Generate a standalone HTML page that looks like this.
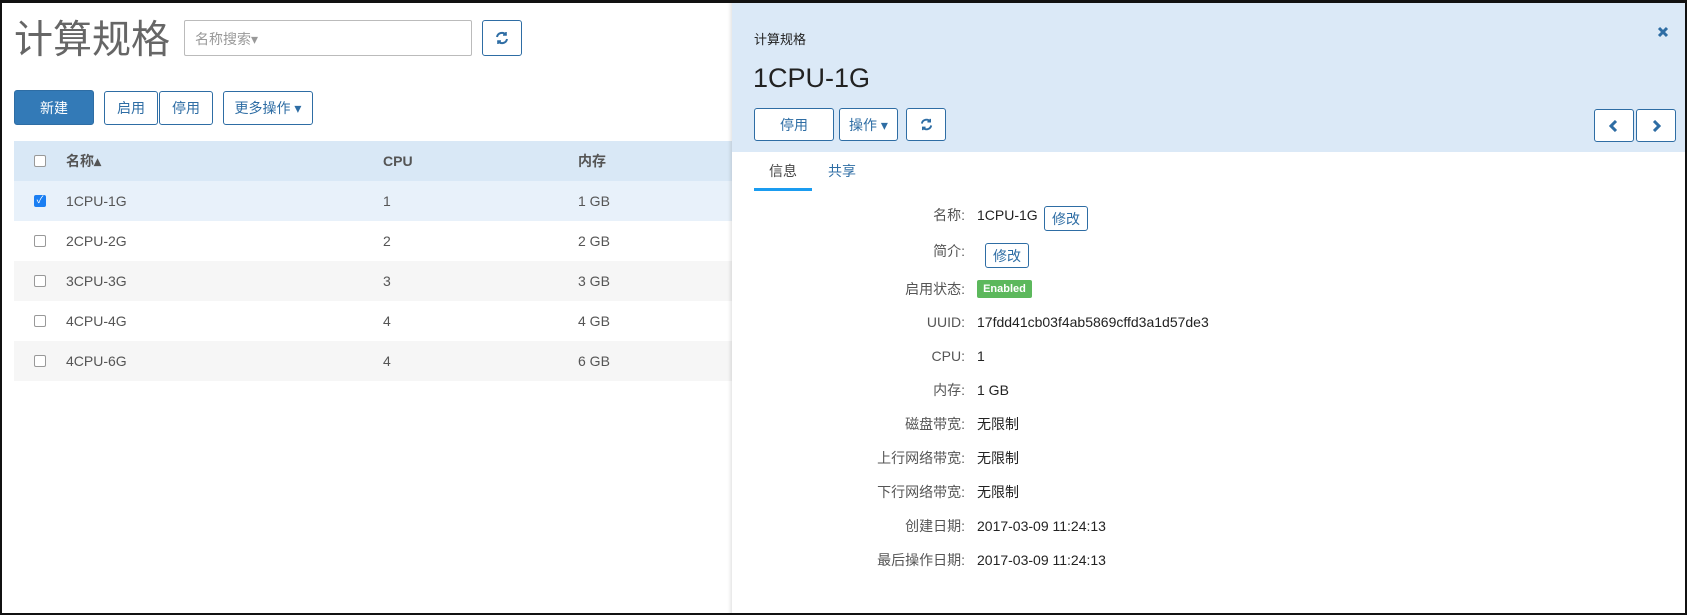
<!DOCTYPE html><html><head><meta charset="utf-8"><style>
*{box-sizing:border-box;margin:0;padding:0}
body{width:1687px;height:615px;overflow:hidden;background:#fff;font-family:"Liberation Sans","Noto Sans CJK SC",sans-serif;color:#333;font-size:14px;line-height:16px;position:relative}
.frame{position:absolute;inset:0;border:2px solid #111;border-top-width:3px;pointer-events:none;z-index:10}
.a{position:absolute}
.btn{position:absolute;border:1px solid #2e6da4;border-radius:3px;background:#fff;color:#2e6da4;display:flex;align-items:center;justify-content:center;font-size:14px}
.row{position:absolute;left:14px;width:720px;height:40px}
.row span{position:absolute;top:12px;color:#555;line-height:16px}
.cb{position:absolute;left:20px;top:14px;width:12px;height:12px;border:1px solid #999;border-radius:2px;background:#fff}
.lbl{position:absolute;width:240px;left:725px;text-align:right;color:#555;line-height:16px}
.val{position:absolute;left:977px;color:#222;line-height:16px}
</style></head><body>
<div class="frame"></div>
<div class="a" style="left:14px;top:20px;font-size:39px;line-height:42px;color:#666">计算规格</div>
<div class="a" style="left:184px;top:20px;width:288px;height:36px;border:1px solid #bbb;border-radius:2px;color:#999;font-size:14px;padding:10px 10px">名称搜索▾</div>
<div class="btn" style="left:482px;top:20px;width:40px;height:36px"><svg width="16" height="16" viewBox="0 0 16 16" fill="none" stroke="#2e6da4" stroke-width="2"><path d="M3 7a5 5 0 0 1 9-2"/><path d="M13 9a5 5 0 0 1-9 2"/><path d="M12 2v3h-3M4 14v-3h3" stroke-width="1.6"/></svg></div>
<div class="btn" style="left:14px;top:90px;width:80px;height:35px;background:#337ab7;color:#fff">新建</div>
<div class="btn" style="left:104px;top:91px;width:54px;height:34px">启用</div>
<div class="btn" style="left:159px;top:91px;width:54px;height:34px">停用</div>
<div class="btn" style="left:223px;top:91px;width:90px;height:34px">更多操作 ▾</div>
<div class="row" style="top:141px;background:#d9e8f6"><div class="cb"></div><span style="left:52px;font-weight:bold;color:#555">名称▴</span><span style="left:369px;font-weight:bold">CPU</span><span style="left:564px;font-weight:bold">内存</span></div>
<div class="row" style="top:181px;background:#e8f1fa"><div class="cb" style="background:#1a7ef2;border-color:#1a7ef2;color:#fff;font-size:10px;line-height:10px;text-align:center">✓</div><span style="left:52px">1CPU-1G</span><span style="left:369px">1</span><span style="left:564px">1 GB</span></div>
<div class="row" style="top:221px"><div class="cb"></div><span style="left:52px">2CPU-2G</span><span style="left:369px">2</span><span style="left:564px">2 GB</span></div>
<div class="row" style="top:261px;background:#f6f6f6"><div class="cb"></div><span style="left:52px">3CPU-3G</span><span style="left:369px">3</span><span style="left:564px">3 GB</span></div>
<div class="row" style="top:301px"><div class="cb"></div><span style="left:52px">4CPU-4G</span><span style="left:369px">4</span><span style="left:564px">4 GB</span></div>
<div class="row" style="top:341px;background:#f6f6f6"><div class="cb"></div><span style="left:52px">4CPU-6G</span><span style="left:369px">4</span><span style="left:564px">6 GB</span></div>
<div class="a" style="left:732px;top:0;width:955px;height:615px;background:#fff;box-shadow:-2px 0 3px rgba(0,0,0,.1)"></div>
<div class="a" style="left:732px;top:0;width:955px;height:152px;background:#dbe9f7"></div>
<div class="a" style="left:754px;top:32px;font-size:13px;color:#222">计算规格</div>
<div class="a" style="left:753px;top:63px;font-size:27px;line-height:30px;color:#222">1CPU-1G</div>
<svg class="a" style="left:1657px;top:26px" width="12" height="12" viewBox="0 0 12 12"><path d="M2 2L10 10M10 2L2 10" stroke="#2e6da4" stroke-width="3"/></svg>
<div class="btn" style="left:754px;top:108px;width:80px;height:33px">停用</div>
<div class="btn" style="left:839px;top:108px;width:59px;height:33px">操作 ▾</div>
<div class="btn" style="left:906px;top:108px;width:40px;height:33px"><svg width="15" height="15" viewBox="0 0 16 16" fill="none" stroke="#2e6da4" stroke-width="2"><path d="M3 7a5 5 0 0 1 9-2"/><path d="M13 9a5 5 0 0 1-9 2"/><path d="M12 2v3h-3M4 14v-3h3" stroke-width="1.6"/></svg></div>
<div class="btn" style="left:1594px;top:109px;width:40px;height:33px"><svg width="10" height="12" viewBox="0 0 10 12"><path d="M7 1L2 6L7 11" fill="none" stroke="#2e6da4" stroke-width="3"/></svg></div>
<div class="btn" style="left:1636px;top:109px;width:40px;height:33px"><svg width="10" height="12" viewBox="0 0 10 12"><path d="M3 1L8 6L3 11" fill="none" stroke="#2e6da4" stroke-width="3"/></svg></div>
<div class="a" style="left:769px;top:163px;color:#444">信息</div>
<div class="a" style="left:828px;top:163px;color:#2e6da4">共享</div>
<div class="a" style="left:754px;top:188px;width:58px;height:3px;background:#1a9cf0"></div>
<div class="lbl" style="top:207px">名称:</div><div class="val" style="top:207px">1CPU-1G</div>
<div class="btn" style="left:1044px;top:206px;width:44px;height:25px">修改</div>
<div class="lbl" style="top:243px">简介:</div>
<div class="btn" style="left:985px;top:243px;width:44px;height:25px">修改</div>
<div class="lbl" style="top:281px">启用状态:</div>
<div class="a" style="left:977px;top:280px;width:55px;height:18px;background:#5cb85c;color:#fff;font-size:11px;font-weight:bold;text-align:center;line-height:18px;border-radius:2px">Enabled</div>
<div class="lbl" style="top:314px">UUID:</div><div class="val" style="top:314px">17fdd41cb03f4ab5869cffd3a1d57de3</div>
<div class="lbl" style="top:348px">CPU:</div><div class="val" style="top:348px">1</div>
<div class="lbl" style="top:382px">内存:</div><div class="val" style="top:382px">1 GB</div>
<div class="lbl" style="top:416px">磁盘带宽:</div><div class="val" style="top:416px">无限制</div>
<div class="lbl" style="top:450px">上行网络带宽:</div><div class="val" style="top:450px">无限制</div>
<div class="lbl" style="top:484px">下行网络带宽:</div><div class="val" style="top:484px">无限制</div>
<div class="lbl" style="top:518px">创建日期:</div><div class="val" style="top:518px">2017-03-09 11:24:13</div>
<div class="lbl" style="top:552px">最后操作日期:</div><div class="val" style="top:552px">2017-03-09 11:24:13</div>
</body></html>
